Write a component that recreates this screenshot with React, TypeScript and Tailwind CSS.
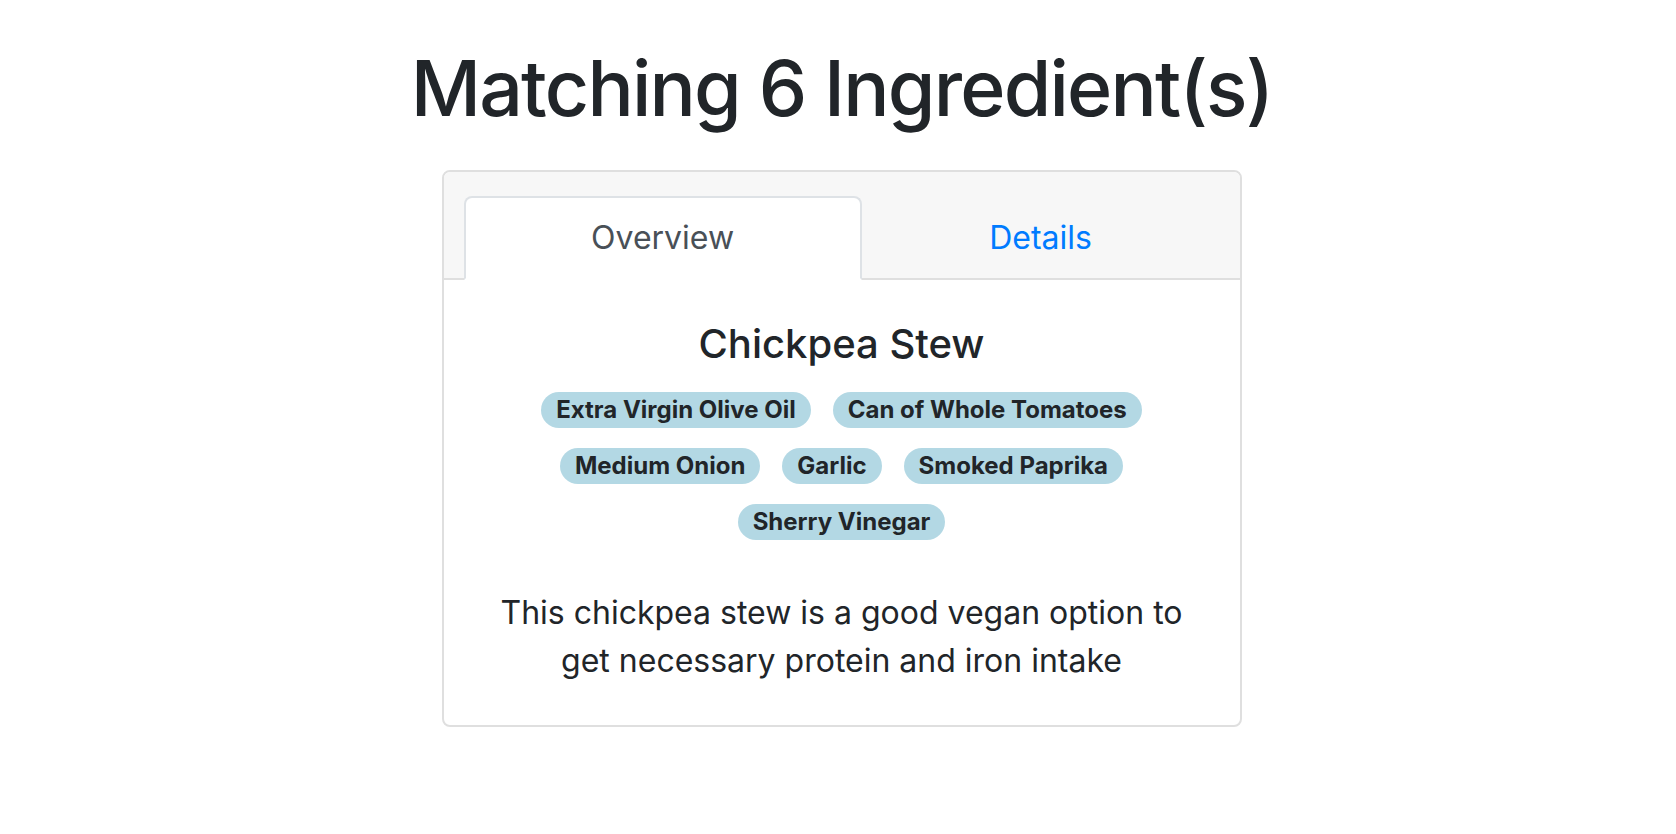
import React from "react";

const ingredients = [
  "Extra Virgin Olive Oil",
  "Can of Whole Tomatoes",
  "Medium Onion",
  "Garlic",
  "Smoked Paprika",
  "Sherry Vinegar",
];

export default function App() {
  return (
    <div
      className="min-h-screen bg-white pl-[7px] text-[#212529]"
      style={{ fontFamily: "Inter, 'Noto Sans', sans-serif" }}
    >
      <div className="flex flex-col items-center pt-[40px]">
        <h1 className="text-[77px] font-medium leading-[96px] tracking-[-1.8px]">
          Matching 6 Ingredient(s)
        </h1>

        <div className="mt-[34px] w-[800px] rounded-[8px] border-2 border-[#dfdfdf]">
          <div className="rounded-t-[6px] border-b-2 border-[#dfdfdf] bg-[#f7f7f7] px-[40px] pt-[24px]">
            <div className="-mx-[20px] -mb-[2px] flex">
              <button
                type="button"
                className="flex-auto rounded-t-[8px] border-2 border-[#dee2e6] border-b-white bg-white px-[32px] py-[16px] text-center text-[32px] leading-[48px] text-[#495057]"
              >
                Overview
              </button>
              <button
                type="button"
                className="flex-auto rounded-t-[8px] border-2 border-transparent px-[32px] py-[16px] text-center text-[32px] leading-[48px] text-[#007bff]"
              >
                Details
              </button>
            </div>
          </div>

          <div className="p-[40px] text-center">
            <h5 className="mb-[24px] text-[40px] font-medium leading-[48px]">
              Chickpea Stew
            </h5>
            <div className="flex flex-wrap justify-center gap-x-[22px] gap-y-[20px]">
              {ingredients.map((name) => (
                <span
                  key={name}
                  className="rounded-full bg-[#b3d8e4] px-[15px] py-[6px] text-[24px] font-bold leading-[24px]"
                >
                  {name}
                </span>
              ))}
            </div>
            <p className="mt-[49px] text-[32px] leading-[48px]">
              This chickpea stew is a good vegan option to get necessary
              protein and iron intake
            </p>
          </div>
        </div>
      </div>
    </div>
  );
}
